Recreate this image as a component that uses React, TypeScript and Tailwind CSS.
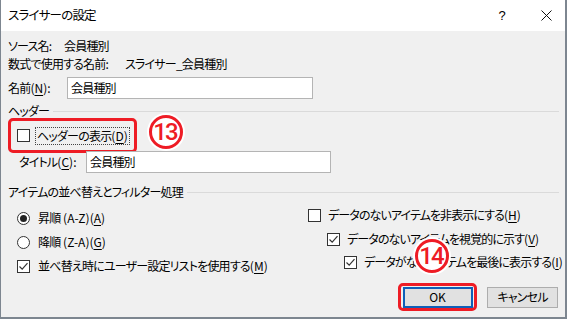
import type { ReactNode } from "react";

const font =
  "font-['Noto_Sans_CJK_JP','Noto_Sans',sans-serif] [font-feature-settings:'palt'] tracking-[-0.8px] whitespace-nowrap";

function Box({ checked = false }: { checked?: boolean }) {
  return (
    <span className="w-[13px] h-[13px] border border-[#333] bg-white shrink-0 flex items-center justify-center">
      {checked && (
        <svg width="11" height="11" viewBox="0 0 11 11">
          <path d="M1.5 5.5 L4.2 8.2 L9.5 2.2" fill="none" stroke="#333" strokeWidth="1.2" />
        </svg>
      )}
    </span>
  );
}

function Radio({ on = false }: { on?: boolean }) {
  return (
    <span className="w-[13px] h-[13px] rounded-full border border-[#333] bg-white shrink-0 flex items-center justify-center">
      {on && <span className="w-[7px] h-[7px] rounded-full bg-[#222]" />}
    </span>
  );
}

// アクセスキー "(X)"
function Acc({ k, pre = "" }: { k: string; pre?: string }) {
  return (
    <span className="tracking-normal">
      {pre}(<u className="underline underline-offset-2 decoration-1">{k}</u>)
    </span>
  );
}

function Circled({ n }: { n: string }) {
  return (
    <div className="w-[38px] h-[38px] rounded-full bg-white flex items-center justify-center">
      <div className="w-[34px] h-[34px] rounded-full border-[3px] border-[#ee1c25] flex items-center justify-center">
        <span className="font-['Roboto',sans-serif] font-medium text-[24px] leading-none tracking-[-2px] text-[#ee1c25] pr-[2px]">
          {n}
        </span>
      </div>
    </div>
  );
}

function GroupLabel({ text, className = "" }: { text: string; className?: string }) {
  return (
    <div className={`flex items-center h-[18px] ${className}`}>
      <span>{text}</span>
      <span className="flex-1 h-px bg-[#dadada] ml-[4px]" />
    </div>
  );
}

function Row({ children, className = "" }: { children: ReactNode; className?: string }) {
  return <div className={`flex items-center gap-[7px] ${className}`}>{children}</div>;
}

export default function App() {
  return (
    <div
      className={`relative w-[567px] h-[319px] bg-[#f0f0f0] border-l border-r-2 border-b-2 border-[#7d8690] text-[12px] text-black overflow-hidden ${font}`}
    >
      {/* タイトルバー */}
      <div className="h-[31px] bg-white flex items-center pl-[7px] pr-[13px]">
        <span className="text-[12.5px]">スライサーの設定</span>
        <span className="ml-auto mr-[36px] text-[13px] font-['Liberation_Sans',sans-serif]">?</span>
        <svg width="11" height="11" viewBox="0 0 11 11">
          <path d="M0.5 0.5 L10.5 10.5 M10.5 0.5 L0.5 10.5" stroke="#111" strokeWidth="1" />
        </svg>
      </div>

      <div className="pl-[7px] pr-[6px] pt-[6px]">
        <div className="flex h-[18px] items-center">
          <span className="w-[56px]">ソース名:</span>
          <span>会員種別</span>
        </div>
        <div className="flex h-[18px] items-center">
          <span className="w-[117px]">数式で使用する名前:</span>
          <span>スライサー_会員種別</span>
        </div>
        <div className="flex h-[22px] items-center mt-[4px]">
          <span className="w-[59px]">
            名前<Acc k="N" />:
          </span>
          <div className="w-[246px] h-[22px] bg-white border border-[#b4b4b4] flex items-center pl-[3px]">
            会員種別
          </div>
        </div>

        <GroupLabel text="ヘッダー" className="mt-[3px]" />
        <div className="mt-[-2px] w-[129px] h-[35px] border-[3px] border-[#ee1c25] rounded-[5px] flex items-center pl-[6px]">
          <Box />
          <span className="ml-[5px] h-[18px] px-[1px] flex items-center border border-dotted border-[#444]">
            ヘッダーの表示<Acc k="D" />
          </span>
        </div>
        <div className="flex h-[22px] items-center mt-[-2px]">
          <span className="w-[78px] pl-[11px]">
            タイトル<Acc k="C" />:
          </span>
          <div className="w-[245px] h-[22px] bg-white border border-[#b4b4b4] flex items-center pl-[3px]">
            会員種別
          </div>
        </div>

        <GroupLabel text="アイテムの並べ替えとフィルター処理" className="mt-[10px]" />

        <div className="flex mt-[5px]">
          <div className="w-[300px] shrink-0 pl-[9px]">
            <Row className="h-[24px] gap-[8px]">
              <Radio on />
              <span>
                昇順<Acc pre=" (A-Z)" k="A" />
              </span>
            </Row>
            <Row className="h-[24px] gap-[8px]">
              <Radio />
              <span>
                降順<Acc pre=" (Z-A)" k="G" />
              </span>
            </Row>
            <Row className="h-[24px] gap-[8px]">
              <Box checked />
              <span>
                並べ替え時にユーザー設定リストを使用する<Acc k="M" />
              </span>
            </Row>
          </div>
          <div className="flex-1 min-w-0 mt-[-3px] tracking-[-0.9px]">
            <Row className="h-[24px]">
              <Box />
              <span>
                データのないアイテムを非表示にする<Acc k="H" />
              </span>
            </Row>
            <Row className="h-[24px] pl-[19px]">
              <Box checked />
              <span>
                データのないアイテムを視覚的に示す<Acc k="V" />
              </span>
            </Row>
            <Row className="h-[22px] pl-[36px]">
              <Box checked />
              <span>
                データがないアイテムを最後に表示する<Acc k="I" />
              </span>
            </Row>
          </div>
        </div>

        <div className="flex justify-end items-center mt-[5px] pr-[1px]">
          <div className="w-[79px] h-[28px] border-[3px] border-[#ee1c25] rounded-[5px] flex items-center justify-center">
            <button className="w-[70px] h-[21px] bg-[#e1e1e1] border-2 border-[#0f5fb8] flex items-center justify-center tracking-normal">
              OK
            </button>
          </div>
          <button className="ml-[10px] w-[71px] h-[21px] bg-[#e1e1e1] border border-[#adadad] flex items-center justify-center">
            キャンセル
          </button>
        </div>
      </div>

      {/* 注釈の番号 */}
      <div className="absolute left-[146px] top-[113px]">
        <Circled n="13" />
      </div>
      <div className="absolute left-[412px] top-[237px]">
        <Circled n="14" />
      </div>
    </div>
  );
}
